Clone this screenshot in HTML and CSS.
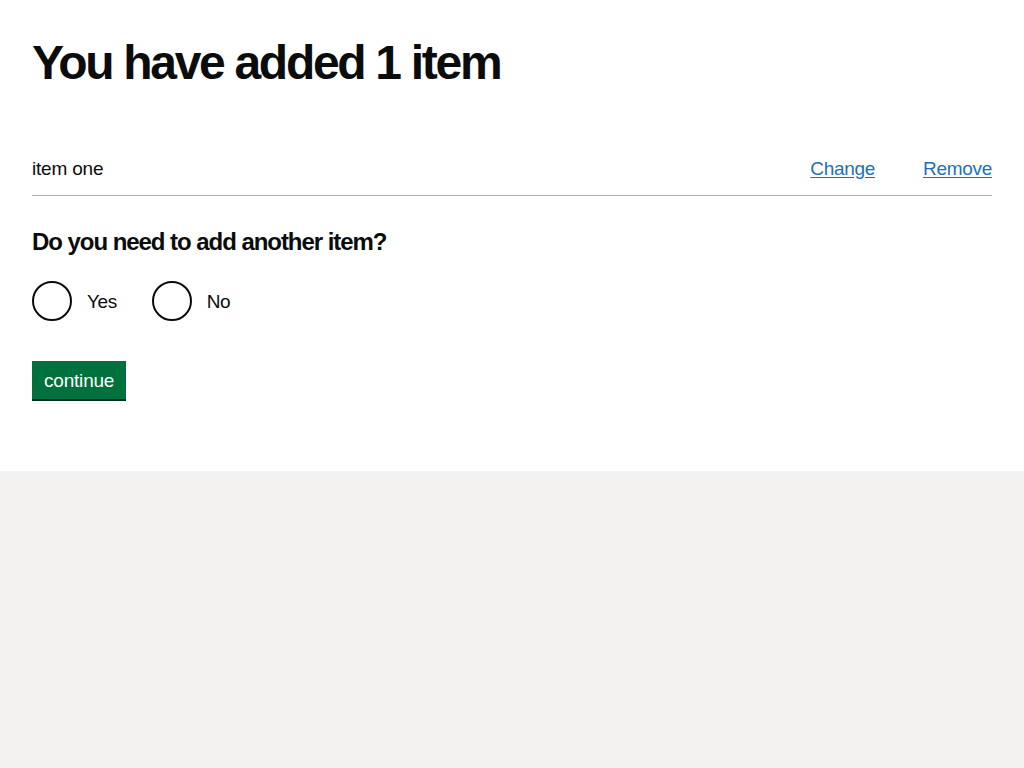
FILE: index.html
```html
<!DOCTYPE html>
<html lang="en">
<head>
<meta charset="utf-8">
<title>You have added 1 item</title>
<link rel="stylesheet" href="styles.css">
</head>
<body>
<main class="main">
  <h1 class="heading-xl">You have added 1 item</h1>
  <dl class="summary-list">
    <div class="summary-row">
      <dt class="summary-key">item one</dt>
      <dd class="summary-actions">
        <a class="link" href="#">Change</a>
        <a class="link" href="#">Remove</a>
      </dd>
    </div>
  </dl>
  <form class="form">
    <fieldset class="fieldset">
      <legend class="legend">Do you need to add another item?</legend>
      <div class="radios">
        <label class="radio"><input type="radio" name="another" value="yes"><span class="radio-circle"></span><span class="radio-label">Yes</span></label>
        <label class="radio"><input type="radio" name="another" value="no"><span class="radio-circle"></span><span class="radio-label">No</span></label>
      </div>
    </fieldset>
    <button class="button" type="button">continue</button>
  </form>
</main>
</body>
</html>
```

FILE: styles.css
```css
html, body {
  margin: 0;
  padding: 0;
}
body {
  background: #f3f2f1;
  color: #0b0c0c;
  font-family: "Liberation Sans", Arial, sans-serif;
}
.main {
  background: #ffffff;
  padding: 38px 32px 40px;
}
.heading-xl {
  margin: 0;
  font-size: 48px;
  line-height: 50px;
  font-weight: 700;
  letter-spacing: -2.3px;
}
.summary-list {
  margin: 0;
  padding-top: 68px;
}
.summary-row {
  display: flex;
  justify-content: space-between;
  align-items: baseline;
  border-bottom: 1px solid #b1b4b6;
  padding-bottom: 14px;
}
.summary-key {
  margin: 0;
  font-size: 19px;
  line-height: 25px;
  letter-spacing: -0.2px;
}
.summary-actions {
  margin: 0;
  display: flex;
  gap: 48px;
  font-size: 19px;
  line-height: 25px;
  letter-spacing: -0.3px;
}
.link {
  color: #1d70b8;
  text-decoration: underline;
  text-underline-offset: 2px;
}
.form {
  margin: 0;
}
.fieldset {
  border: 0;
  margin: 31px 0 0;
  padding: 0;
  min-width: 0;
}
.legend {
  padding: 0;
  font-size: 24px;
  line-height: 30px;
  font-weight: 700;
  letter-spacing: -1.05px;
}
.radios {
  display: flex;
  margin-top: 24px;
}
.radio {
  display: flex;
  align-items: center;
  margin-right: 20px;
  cursor: pointer;
}
.radio input {
  position: absolute;
  opacity: 0;
  width: 0;
  height: 0;
}
.radio-circle {
  width: 36px;
  height: 36px;
  border: 2px solid #0b0c0c;
  border-radius: 50%;
  flex: none;
}
.radio-label {
  padding: 0 15px;
  font-size: 19px;
  line-height: 25px;
  letter-spacing: -0.4px;
}
.button {
  margin-top: 40px;
  display: inline-block;
  background: #00703c;
  color: #ffffff;
  border: 2px solid transparent;
  border-radius: 0;
  box-shadow: 0 2px 0 #002d18;
  padding: 8px 10px 7px;
  font-family: "Liberation Sans", Arial, sans-serif;
  font-size: 19px;
  line-height: 19px;
  letter-spacing: -0.2px;
  margin-bottom: 32px;
  cursor: pointer;
}
```
